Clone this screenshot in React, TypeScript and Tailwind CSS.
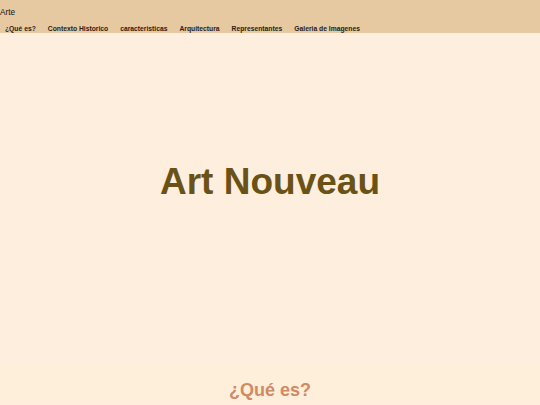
export default function App() {
  const links = ['¿Qué es?', 'Contexto Historico', 'caracteristicas', 'Arquitectura', 'Representantes', 'Galeria de Imagenes'];

  return (
    <div className="min-h-screen bg-[#feeedb]" style={{ fontFamily: '"Liberation Sans", Arial, sans-serif' }}>
      {/* Cabecera */}
      <header className="h-[33px] bg-[#e7c9a1]">
        <div className="pt-[8px] text-[8.2px] leading-[10px] text-[#111]">Arte</div>
        <nav className="mt-[6px] flex pl-[5px] gap-[12px]">
          {links.map((l) => (
            <a key={l} className="text-[6.75px] leading-[9px] font-bold text-[#2a2014]">
              {l}
            </a>
          ))}
        </nav>
      </header>

      {/* Portada */}
      <section className="h-[330px] bg-[#fdeedd] flex justify-center pt-[128px]">
        <h1 className="text-[37px] leading-[42px] font-bold text-[#6a5116]">Art Nouveau</h1>
      </section>

      {/* ¿Qué es? */}
      <section className="bg-[#feefda] pt-[16px]">
        <h2 className="text-center text-[18px] leading-[22px] font-bold text-[#d08a66]">¿Qué es?</h2>
      </section>
    </div>
  );
}
